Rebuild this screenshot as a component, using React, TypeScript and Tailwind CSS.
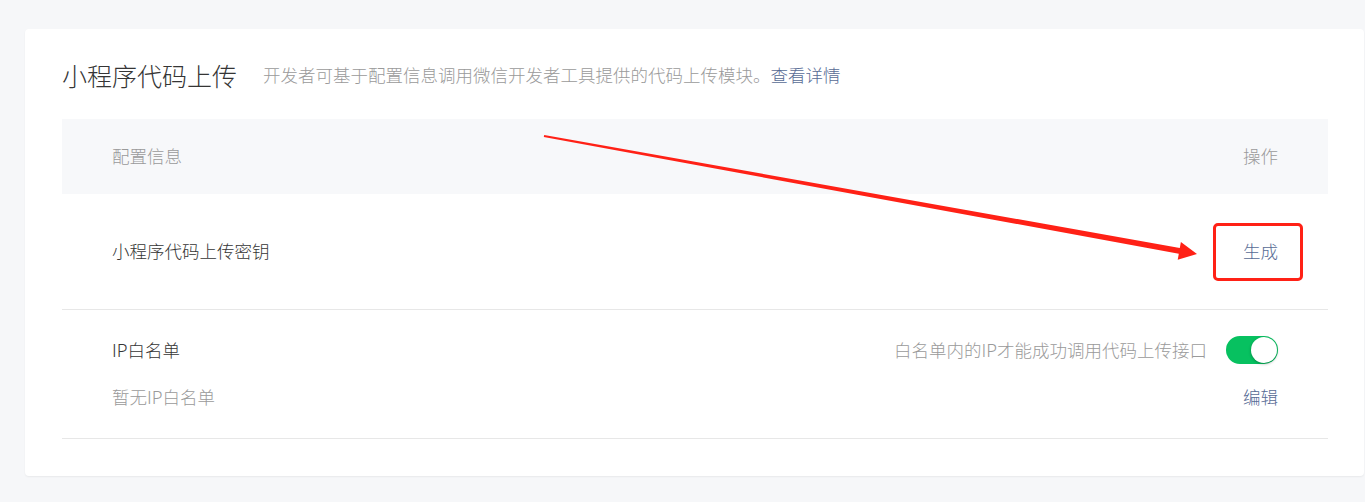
export default function App() {
  return (
    <div
      className="relative w-[1365px] h-[502px] overflow-hidden bg-[#f6f7f9] pt-[29px] pl-[25px] pr-[1px] font-light"
      style={{ fontFamily: '"Noto Sans CJK SC", "Noto Sans", sans-serif' }}
    >
      {/* Card */}
      <div className="bg-white rounded-[4px] shadow-[0_1px_2px_rgba(0,0,0,0.06)] pt-[30px] pb-[37px] pl-[37px] pr-[36px]">
        <div className="flex items-center h-[32px]">
          <h2 className="text-[25px] leading-[32px] text-[#353535] font-light">小程序代码上传</h2>
          <p className="ml-[26px] text-[17.5px] text-[#9a9a9a]">
            开发者可基于配置信息调用微信开发者工具提供的代码上传模块。
            <a className="text-[#576b95]">查看详情</a>
          </p>
        </div>

        {/* Table */}
        <div className="mt-[28px] text-[17.5px]">
          <div className="flex items-center justify-between h-[75px] bg-[#f7f8fa] px-[50px] text-[#9a9a9a]">
            <span>配置信息</span>
            <span>操作</span>
          </div>

          <div className="flex items-center justify-between h-[116px] px-[50px] border-b border-[#e7e7e7]">
            <span className="text-[#353535]">小程序代码上传密钥</span>
            <a className="text-[#576b95]">生成</a>
          </div>

          <div className="flex justify-between px-[50px] pt-[26px] pb-[27px] border-b border-[#e7e7e7]">
            <div className="flex flex-col gap-[19px] leading-[28px]">
              <span className="text-[#353535]">IP白名单</span>
              <span className="text-[#9a9a9a]">暂无IP白名单</span>
            </div>
            <div className="flex flex-col items-end gap-[19px] leading-[28px]">
              <div className="flex items-center gap-[19px]">
                <span className="text-[#9a9a9a]">白名单内的IP才能成功调用代码上传接口</span>
                <div className="relative w-[52px] h-[28px] rounded-full bg-[#07c160]">
                  <div className="absolute right-[1px] top-[1px] w-[26px] h-[26px] rounded-full bg-white shadow-[0_1px_3px_rgba(0,0,0,0.3)]" />
                </div>
              </div>
              <a className="text-[#576b95]">编辑</a>
            </div>
          </div>
        </div>
      </div>

      {/* Annotation overlay */}
      <svg className="absolute left-0 top-0 pointer-events-none" width="1365" height="502">
        <polygon
          points="544.2,135 1179.8,247.9 1180.9,241.9 1197,254 1177.7,259.7 1178.8,253.8 543.8,137"
          fill="#ff2116"
        />
      </svg>
      <div className="absolute left-[1213px] top-[223px] w-[90px] h-[58px] border-[3px] border-[#ff2116] rounded-[5px] pointer-events-none" />
    </div>
  )
}
